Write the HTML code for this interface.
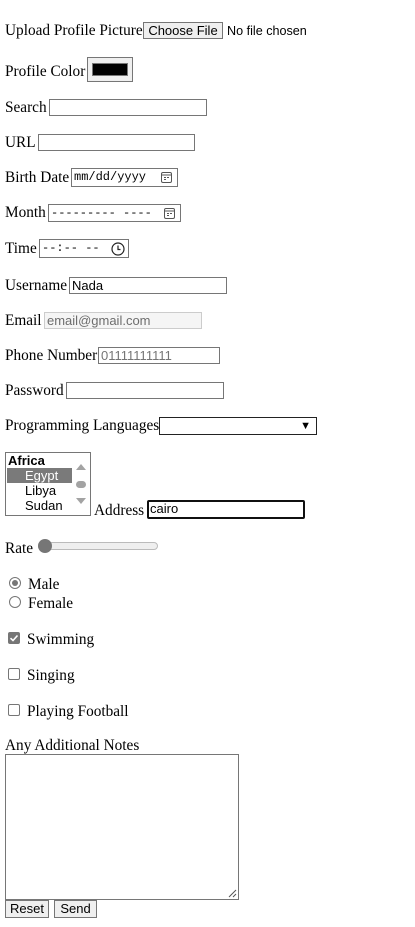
<!DOCTYPE html>
<html><head><meta charset="utf-8"><style>
*{box-sizing:border-box;margin:0;padding:0}
body{width:415px;height:927px;background:#fff;position:relative;font-family:"Liberation Serif",serif;font-size:15.3px;color:#000;overflow:hidden}
.t{position:absolute;line-height:18px;white-space:nowrap}
.b{position:absolute;border:1px solid #767676;background:#fff;font-family:"Liberation Sans",sans-serif;font-size:13px;line-height:16px;padding-left:2px;white-space:nowrap;overflow:hidden}
.btn{position:absolute;border:1px solid #767676;background:#efefef;font-family:"Liberation Sans",sans-serif;font-size:13px;line-height:15px;text-align:center}
.m{font-family:"Liberation Mono",monospace;font-size:12px}
</style></head><body>
<div class="t" style="left:5px;top:22px">Upload Profile Picture</div>
<div class="btn" style="left:143px;top:22px;width:80px;height:17px">Choose File</div>
<div class="t" style="left:227px;top:22px;font-family:'Liberation Sans',sans-serif;font-size:12.6px">No file chosen</div>

<div class="t" style="left:5px;top:63px">Profile Color</div>
<div class="btn" style="left:87px;top:57px;width:46px;height:25px"><div style="position:absolute;left:4px;top:5px;width:36px;height:13px;background:#000;border:1px solid #777"></div></div>

<div class="t" style="left:5px;top:99px">Search</div>
<div class="b" style="left:49px;top:99px;width:158px;height:17px"></div>
<div class="t" style="left:5px;top:134px">URL</div>
<div class="b" style="left:38px;top:134px;width:157px;height:17px"></div>

<div class="t" style="left:5px;top:169px">Birth Date</div>
<div class="b m" style="left:71px;top:168px;width:107px;height:19px;line-height:17px">mm/dd/yyyy
<svg style="position:absolute;right:5px;top:3px" width="11" height="11" viewBox="0 0 11 11"><rect x="0.5" y="0.5" width="10" height="10" rx="1.5" fill="none" stroke="#555"/><line x1="1" y1="3" x2="10" y2="3" stroke="#555"/><rect x="3" y="5" width="2" height="1" fill="#555"/><rect x="6" y="5" width="2" height="1" fill="#555"/><rect x="3" y="7" width="2" height="1" fill="#555"/></svg></div>

<div class="t" style="left:5px;top:204px">Month</div>
<div class="b m" style="left:48px;top:204px;width:133px;height:18px;line-height:16px">--------- ----
<svg style="position:absolute;right:5px;top:3px" width="11" height="11" viewBox="0 0 11 11"><rect x="0.5" y="0.5" width="10" height="10" rx="1.5" fill="none" stroke="#555"/><line x1="1" y1="3" x2="10" y2="3" stroke="#555"/><rect x="3" y="5" width="2" height="1" fill="#555"/><rect x="6" y="5" width="2" height="1" fill="#555"/><rect x="3" y="7" width="2" height="1" fill="#555"/></svg></div>

<div class="t" style="left:5px;top:240px">Time</div>
<div class="b m" style="left:39px;top:239px;width:90px;height:19px;line-height:17px">--:-- --
<svg style="position:absolute;right:3px;top:2px" width="14" height="14" viewBox="0 0 14 14"><circle cx="7" cy="7" r="6" fill="none" stroke="#222" stroke-width="1.2"/><path d="M7 3.5V7.5H9.5" fill="none" stroke="#222" stroke-width="1.2"/></svg></div>

<div class="t" style="left:5px;top:277px">Username</div>
<div class="b" style="left:69px;top:277px;width:158px;height:17px">Nada</div>
<div class="t" style="left:5px;top:312px">Email</div>
<div class="b" style="left:44px;top:312px;width:158px;height:17px;background:#f5f5f5;border-color:#ccc;color:#6d6d6d">email@gmail.com</div>
<div class="t" style="left:5px;top:347px">Phone Number</div>
<div class="b" style="left:98px;top:347px;width:122px;height:17px;color:#757575">01111111111</div>
<div class="t" style="left:5px;top:382px">Password</div>
<div class="b" style="left:66px;top:382px;width:158px;height:17px"></div>
<div class="t" style="left:5px;top:417px">Programming Languages</div>
<div class="b" style="left:159px;top:417px;width:158px;height:18px;border-color:#222"><span style="position:absolute;right:5px;top:0;font-size:11px">▼</span></div>

<div class="b" style="left:5px;top:452px;width:86px;height:64px;padding:0;line-height:15px">
<div style="position:absolute;left:2px;top:0;font-weight:bold">Africa</div>
<div style="position:absolute;left:1px;top:15px;width:65px;height:15px;background:#7a7a7a;color:#fff;padding-left:18px">Egypt</div>
<div style="position:absolute;left:19px;top:30px">Libya</div>
<div style="position:absolute;left:19px;top:45px">Sudan</div>
<svg style="position:absolute;left:68px;top:8px" width="14" height="50" viewBox="0 0 14 50"><path d="M2 9L7 3L12 9Z" fill="#a3a3a3"/><rect x="2" y="20" width="10" height="7" rx="3.5" fill="#a3a3a3"/><path d="M2 37L7 43L12 37Z" fill="#a3a3a3"/></svg>
</div>
<div class="t" style="left:94px;top:502px">Address</div>
<div class="b" style="left:147px;top:500px;width:158px;height:19px;border:2px solid #101010;border-radius:2px;padding-left:1px;line-height:14px">cairo<div style="position:absolute;left:2px;top:15px;width:24px;border-top:1px dotted #e33"></div></div>

<div class="t" style="left:5px;top:540px">Rate</div>
<div style="position:absolute;left:38px;top:542px;width:120px;height:8px;border:1px solid #bbb;border-radius:4px;background:#efefef"></div>
<div style="position:absolute;left:38px;top:539px;width:14px;height:14px;border-radius:50%;background:#767676"></div>

<div style="position:absolute;left:9px;top:577px;width:12px;height:12px;border-radius:50%;border:1px solid #767676;background:#fff"><div style="position:absolute;left:2px;top:2px;width:6px;height:6px;border-radius:50%;background:#767676"></div></div>
<div class="t" style="left:28px;top:576px">Male</div>
<div style="position:absolute;left:9px;top:596px;width:12px;height:12px;border-radius:50%;border:1px solid #767676;background:#fff"></div>
<div class="t" style="left:28px;top:595px">Female</div>

<div style="position:absolute;left:8px;top:632px;width:12px;height:12px;border-radius:2px;background:#767676"><svg width="12" height="12" viewBox="0 0 12 12" style="position:absolute;left:0;top:0"><path d="M2.5 6.2L5 8.5L9.5 3.5" fill="none" stroke="#fff" stroke-width="1.6"/></svg></div>
<div class="t" style="left:27px;top:631px">Swimming</div>
<div style="position:absolute;left:8px;top:668px;width:12px;height:12px;border-radius:2px;border:1px solid #767676"></div>
<div class="t" style="left:27px;top:667px">Singing</div>
<div style="position:absolute;left:8px;top:704px;width:12px;height:12px;border-radius:2px;border:1px solid #767676"></div>
<div class="t" style="left:27px;top:703px">Playing Football</div>

<div class="t" style="left:5px;top:737px">Any Additional Notes</div>
<div class="b" style="left:5px;top:754px;width:234px;height:146px"><svg style="position:absolute;right:1px;bottom:1px" width="9" height="9" viewBox="0 0 9 9"><path d="M8 1L1 8M8 5L5 8" stroke="#555" stroke-width="1"/></svg></div>
<div class="btn" style="left:5px;top:900px;width:44px;height:18px">Reset</div>
<div class="btn" style="left:54px;top:900px;width:43px;height:18px">Send</div>
</body></html>
